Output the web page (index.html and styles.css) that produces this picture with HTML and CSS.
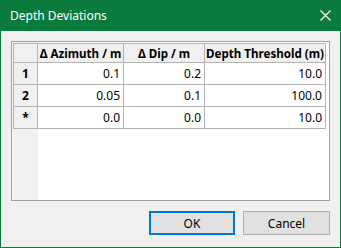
FILE: index.html
```html
<!DOCTYPE html>
<html lang="en">
<head>
  <meta charset="UTF-8">
  <title>Depth Deviations</title>
  <link rel="stylesheet" href="styles.css">
</head>
<body>
  <div class="Dialog">
    <div class="Dialog-Title">
      <span class="Dialog-Title-Text">Depth Deviations</span>
      <svg class="Dialog-Close" width="11" height="11" viewBox="0 0 11 11">
        <path d="M0.5 0.5 L10.5 10.5 M10.5 0.5 L0.5 10.5" stroke="#fff" stroke-width="1.1" fill="none"/>
      </svg>
    </div>

    <div class="Dialog-Body">
      <div class="GridFrame">
        <div class="Grid">
          <div class="Grid-Corner"></div>
          <div class="Grid-Head">&Delta; Azimuth / m</div>
          <div class="Grid-Head">&Delta; Dip / m</div>
          <div class="Grid-Head">Depth Threshold (m)</div>

          <div class="Grid-RowHead">1</div>
          <div class="Grid-Cell">0.1</div>
          <div class="Grid-Cell">0.2</div>
          <div class="Grid-Cell">10.0</div>

          <div class="Grid-RowHead">2</div>
          <div class="Grid-Cell">0.05</div>
          <div class="Grid-Cell">0.1</div>
          <div class="Grid-Cell">100.0</div>

          <div class="Grid-RowHead">*</div>
          <div class="Grid-Cell">0.0</div>
          <div class="Grid-Cell">0.0</div>
          <div class="Grid-Cell">10.0</div>
        </div>
      </div>

      <div class="Dialog-Buttons">
        <button class="Btn Btn-Default">OK</button>
        <button class="Btn">Cancel</button>
      </div>
    </div>
  </div>
</body>
</html>
```

FILE: styles.css
```css
* {
  margin: 0;
  padding: 0;
  box-sizing: border-box;
  font-family: 'Noto Sans', 'Open Sans', sans-serif;
}

body {
  background-color: #f0f0f0;
  overflow: hidden;
}

.Dialog {
  width: 341px;
  height: 248px;
  border: 1px solid #0b7a3d;
  border-top: none;
  background-color: #f0f0f0;
}

.Dialog-Title {
  height: 31px;
  margin: 0 -1px;
  background-color: #0b7a3d;
  color: white;
  display: flex;
  align-items: center;
  justify-content: space-between;
  padding: 0 10px 0 10px;
}

.Dialog-Title-Text {
  font-size: 12px;
}

.Dialog-Body {
  padding: 10px 10px 0 10px;
}

.GridFrame {
  height: 160px;
  border: 1px solid #a0a0a0;
  padding: 1px;
  background: linear-gradient(to right, #fff 1px, #f0f0f0 1px, #f0f0f0 26px, #fff 26px);
}

.Grid {
  display: grid;
  grid-template-columns: 24px 86px 81px 121px;
  grid-template-rows: 19px 22px 22px 22px;
  width: 313px;
  border-left: 1px solid #b4b4b4;
  border-top: 1px solid #b4b4b4;
  font-size: 12px;
  color: #000;
}

.Grid > * {
  border-right: 1px solid #b4b4b4;
  border-bottom: 1px solid #b4b4b4;
  display: flex;
  align-items: center;
}

.Grid-Corner,
.Grid-Head,
.Grid-RowHead {
  background-color: #f0f0f0;
  font-weight: bold;
  justify-content: center;
}

.Grid-Head {
  white-space: nowrap;
  font-size: 11.6px;
}

.Grid-Cell {
  background-color: #fff;
  justify-content: flex-end;
  padding-right: 3px;
}

.Dialog-Buttons {
  display: flex;
  justify-content: flex-end;
  gap: 8px;
  margin-top: 10px;
}

.Btn {
  width: 87px;
  height: 24px;
  background-color: #e1e1e1;
  border: 1px solid #adadad;
  font-size: 12px;
  color: #000;
}

.Btn-Default {
  width: 86px;
  border: 2px solid #0078d7;
}
```
